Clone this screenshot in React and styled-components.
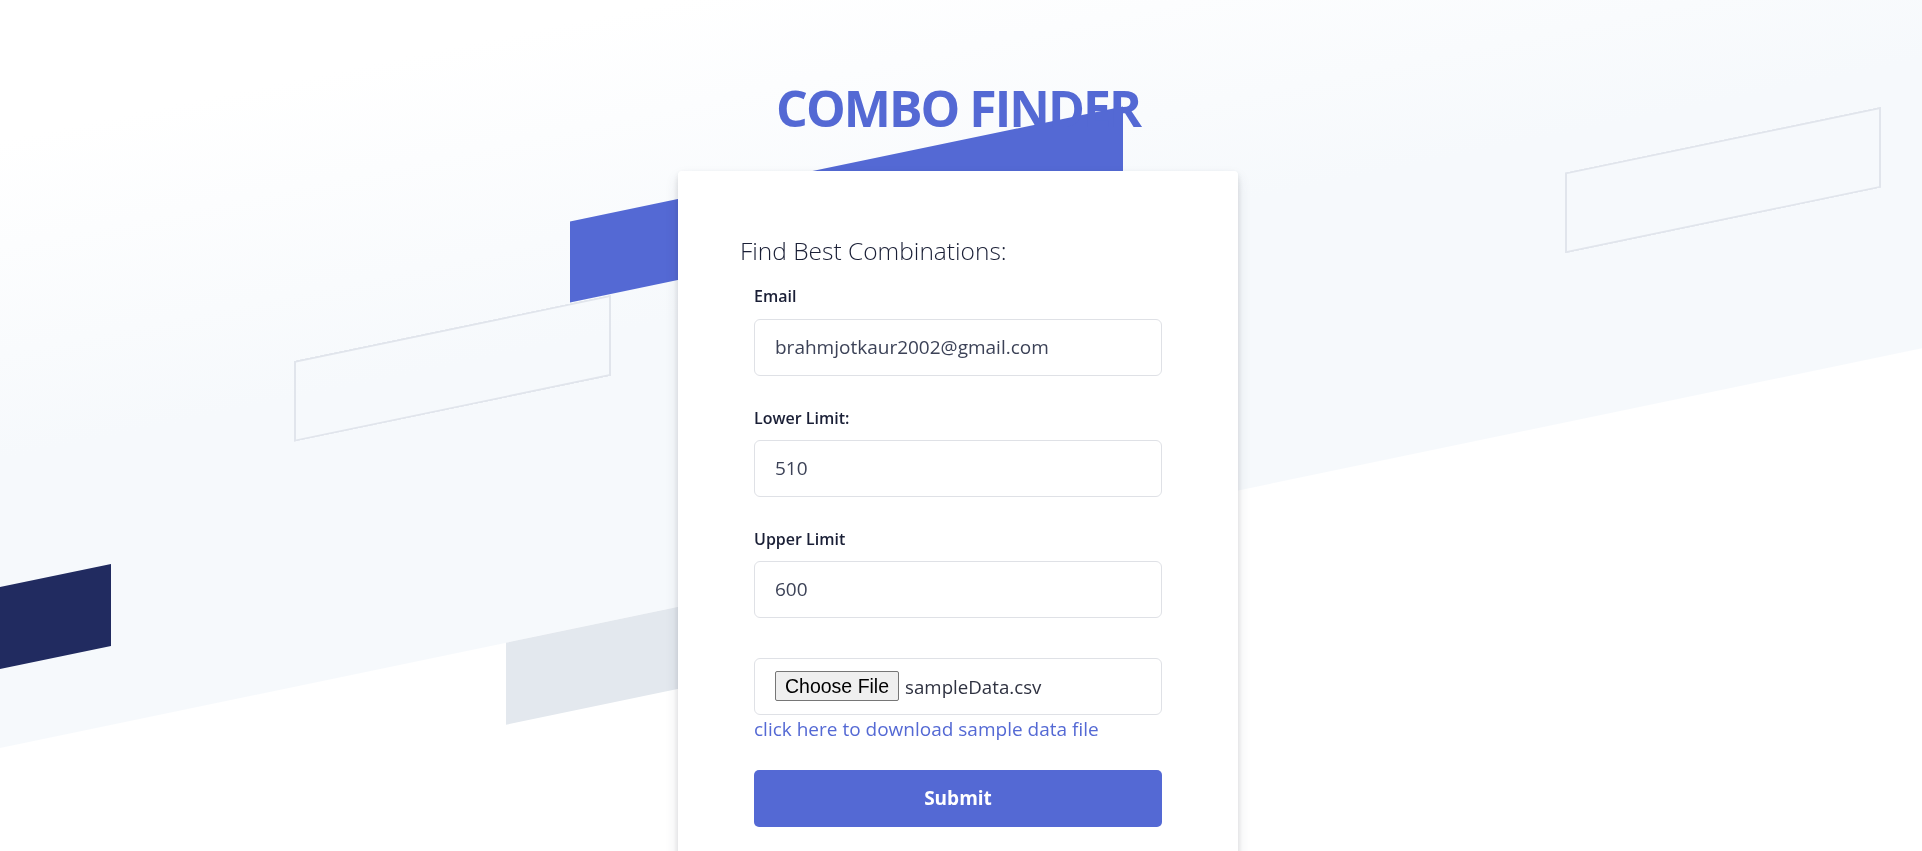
import React from 'react';
import styled, { createGlobalStyle } from 'styled-components';

const GlobalStyle = createGlobalStyle`
	html, body {
		margin: 0;
		padding: 0;
		height: 100%;
		overflow: hidden;
		background: #ffffff;
	}
	body {
		font-family: "Open Sans", "Noto Sans", sans-serif;
		color: #1a1f36;
	}
	* {
		box-sizing: border-box;
	}
`;

// skewed backdrop, stripes are placed in un-skewed coordinates
const Backdrop = styled.div`
	position: fixed;
	inset: 0;
	z-index: 0;
	overflow: hidden;
	pointer-events: none;
`;
const SkewLayer = styled.div`
	position: absolute;
	left: 0;
	top: 0;
	width: 100%;
	height: 100%;
	transform: skewY(-11.75deg);
	transform-origin: 0 0;
`;
const Haze = styled.div`
	position: absolute;
	left: 0;
	right: 0;
	top: -600px;
	height: 1348px;
	background: linear-gradient(to bottom, #ffffff 0, #ffffff 740px, #f6f9fc 1060px);
`;
const Stripe = styled.div`
	position: absolute;
	left: ${p => p.$x}px;
	top: ${p => p.$y}px;
	width: ${p => p.$w}px;
	height: ${p => p.$h || 81}px;
	background: ${p => p.$fill || 'transparent'};
	box-shadow: ${p => p.$outline ? 'inset 0 0 0 2px #e1e5ec' : 'none'};
`;

const Page = styled.main`
	position: relative;
	z-index: 1;
	height: 100vh;
	display: flex;
	flex-direction: column;
	align-items: center;
	padding: 83px 6px 0 0;
`;
const Title = styled.h1`
	margin: 0 0 38px;
	font-size: 50px;
	line-height: 50px;
	font-weight: 700;
	letter-spacing: -2px;
	color: #5469d4;
`;
const Card = styled.section`
	width: 560px;
	background: #ffffff;
	border-radius: 4px;
	box-shadow: 0 7px 14px 0 rgba(60, 66, 87, 0.12), 0 3px 6px 0 rgba(0, 0, 0, 0.12);
	padding: 65px 62px 48px;
`;
const Heading = styled.h2`
	margin: 0 0 22px;
	font-size: 24.5px;
	line-height: 1.2;
	font-weight: 300;
	color: #1a1f36;
`;
const Form = styled.form`
	display: flex;
	flex-direction: column;
	padding: 0 14px;
`;
const Field = styled.div`
	display: flex;
	flex-direction: column;
	margin-bottom: 33px;
`;
const Label = styled.label`
	font-size: 16px;
	line-height: 1.2;
	font-weight: 600;
	margin-bottom: 12px;
	color: #1a1f36;
`;
const Input = styled.input`
	height: 57px;
	padding: 0 20px;
	border: 1px solid #dfe1e6;
	border-radius: 6px;
	background: #ffffff;
	font-family: inherit;
	font-size: 19px;
	color: #3c4257;
	outline: none;
`;
const FileBox = styled.label`
	display: flex;
	align-items: center;
	height: 57px;
	margin-top: 7px;
	padding: 0 20px;
	border: 1px solid #dfe1e6;
	border-radius: 6px;
	background: #ffffff;
`;
const FileButton = styled.span`
	display: inline-flex;
	align-items: center;
	height: 30px;
	padding: 0 9px;
	background: #efefef;
	border: 1px solid #767676;
	border-radius: 2px;
	font-family: "Liberation Sans", Arial, sans-serif;
	font-size: 19.5px;
	color: #000000;
`;
const FileName = styled.span`
	margin-left: 6px;
	font-size: 18.7px;
	color: #2f3241;
`;
const HiddenFile = styled.input`
	display: none;
`;
const SampleLink = styled.a`
	margin-top: 3px;
	font-size: 19px;
	line-height: 1.2;
	color: #5469d4;
	text-decoration: none;
`;
const SubmitButton = styled.button`
	margin-top: 29px;
	height: 57px;
	border: none;
	border-radius: 5px;
	background: #5469d4;
	color: #ffffff;
	font-family: inherit;
	font-size: 19px;
	font-weight: 700;
	cursor: pointer;
`;

const stripes = [
	{ x: 570, y: 340, w: 553, fill: '#5469d4' },
	{ x: 294, y: 422, w: 317, outline: true },
	{ x: 1565, y: 498, w: 316, outline: true },
	{ x: 0, y: 587, w: 111, h: 82, fill: '#212b60' },
	{ x: 506, y: 748, w: 500, h: 82, fill: '#e3e8ee' },
];

export default function App() {
	return (
		<>
			<GlobalStyle />
			<Backdrop>
				<SkewLayer>
					<Haze />
					{stripes.map((s, i) => (
						<Stripe key={i} $x={s.x} $y={s.y} $w={s.w} $h={s.h} $fill={s.fill} $outline={s.outline} />
					))}
				</SkewLayer>
			</Backdrop>
			<Page>
				<Title>COMBO FINDER</Title>
				<Card>
					<Heading>Find Best Combinations:</Heading>
					<Form onSubmit={e => e.preventDefault()}>
						<Field>
							<Label htmlFor="email">Email</Label>
							<Input id="email" type="email" defaultValue="brahmjotkaur2002@gmail.com" />
						</Field>
						<Field>
							<Label htmlFor="lower">Lower Limit:</Label>
							<Input id="lower" type="text" defaultValue="510" />
						</Field>
						<Field>
							<Label htmlFor="upper">Upper Limit</Label>
							<Input id="upper" type="text" defaultValue="600" />
						</Field>
						<FileBox>
							<HiddenFile type="file" accept=".csv" />
							<FileButton>Choose File</FileButton>
							<FileName>sampleData.csv</FileName>
						</FileBox>
						<SampleLink href="#">click here to download sample data file</SampleLink>
						<SubmitButton type="submit">Submit</SubmitButton>
					</Form>
				</Card>
			</Page>
		</>
	);
}
